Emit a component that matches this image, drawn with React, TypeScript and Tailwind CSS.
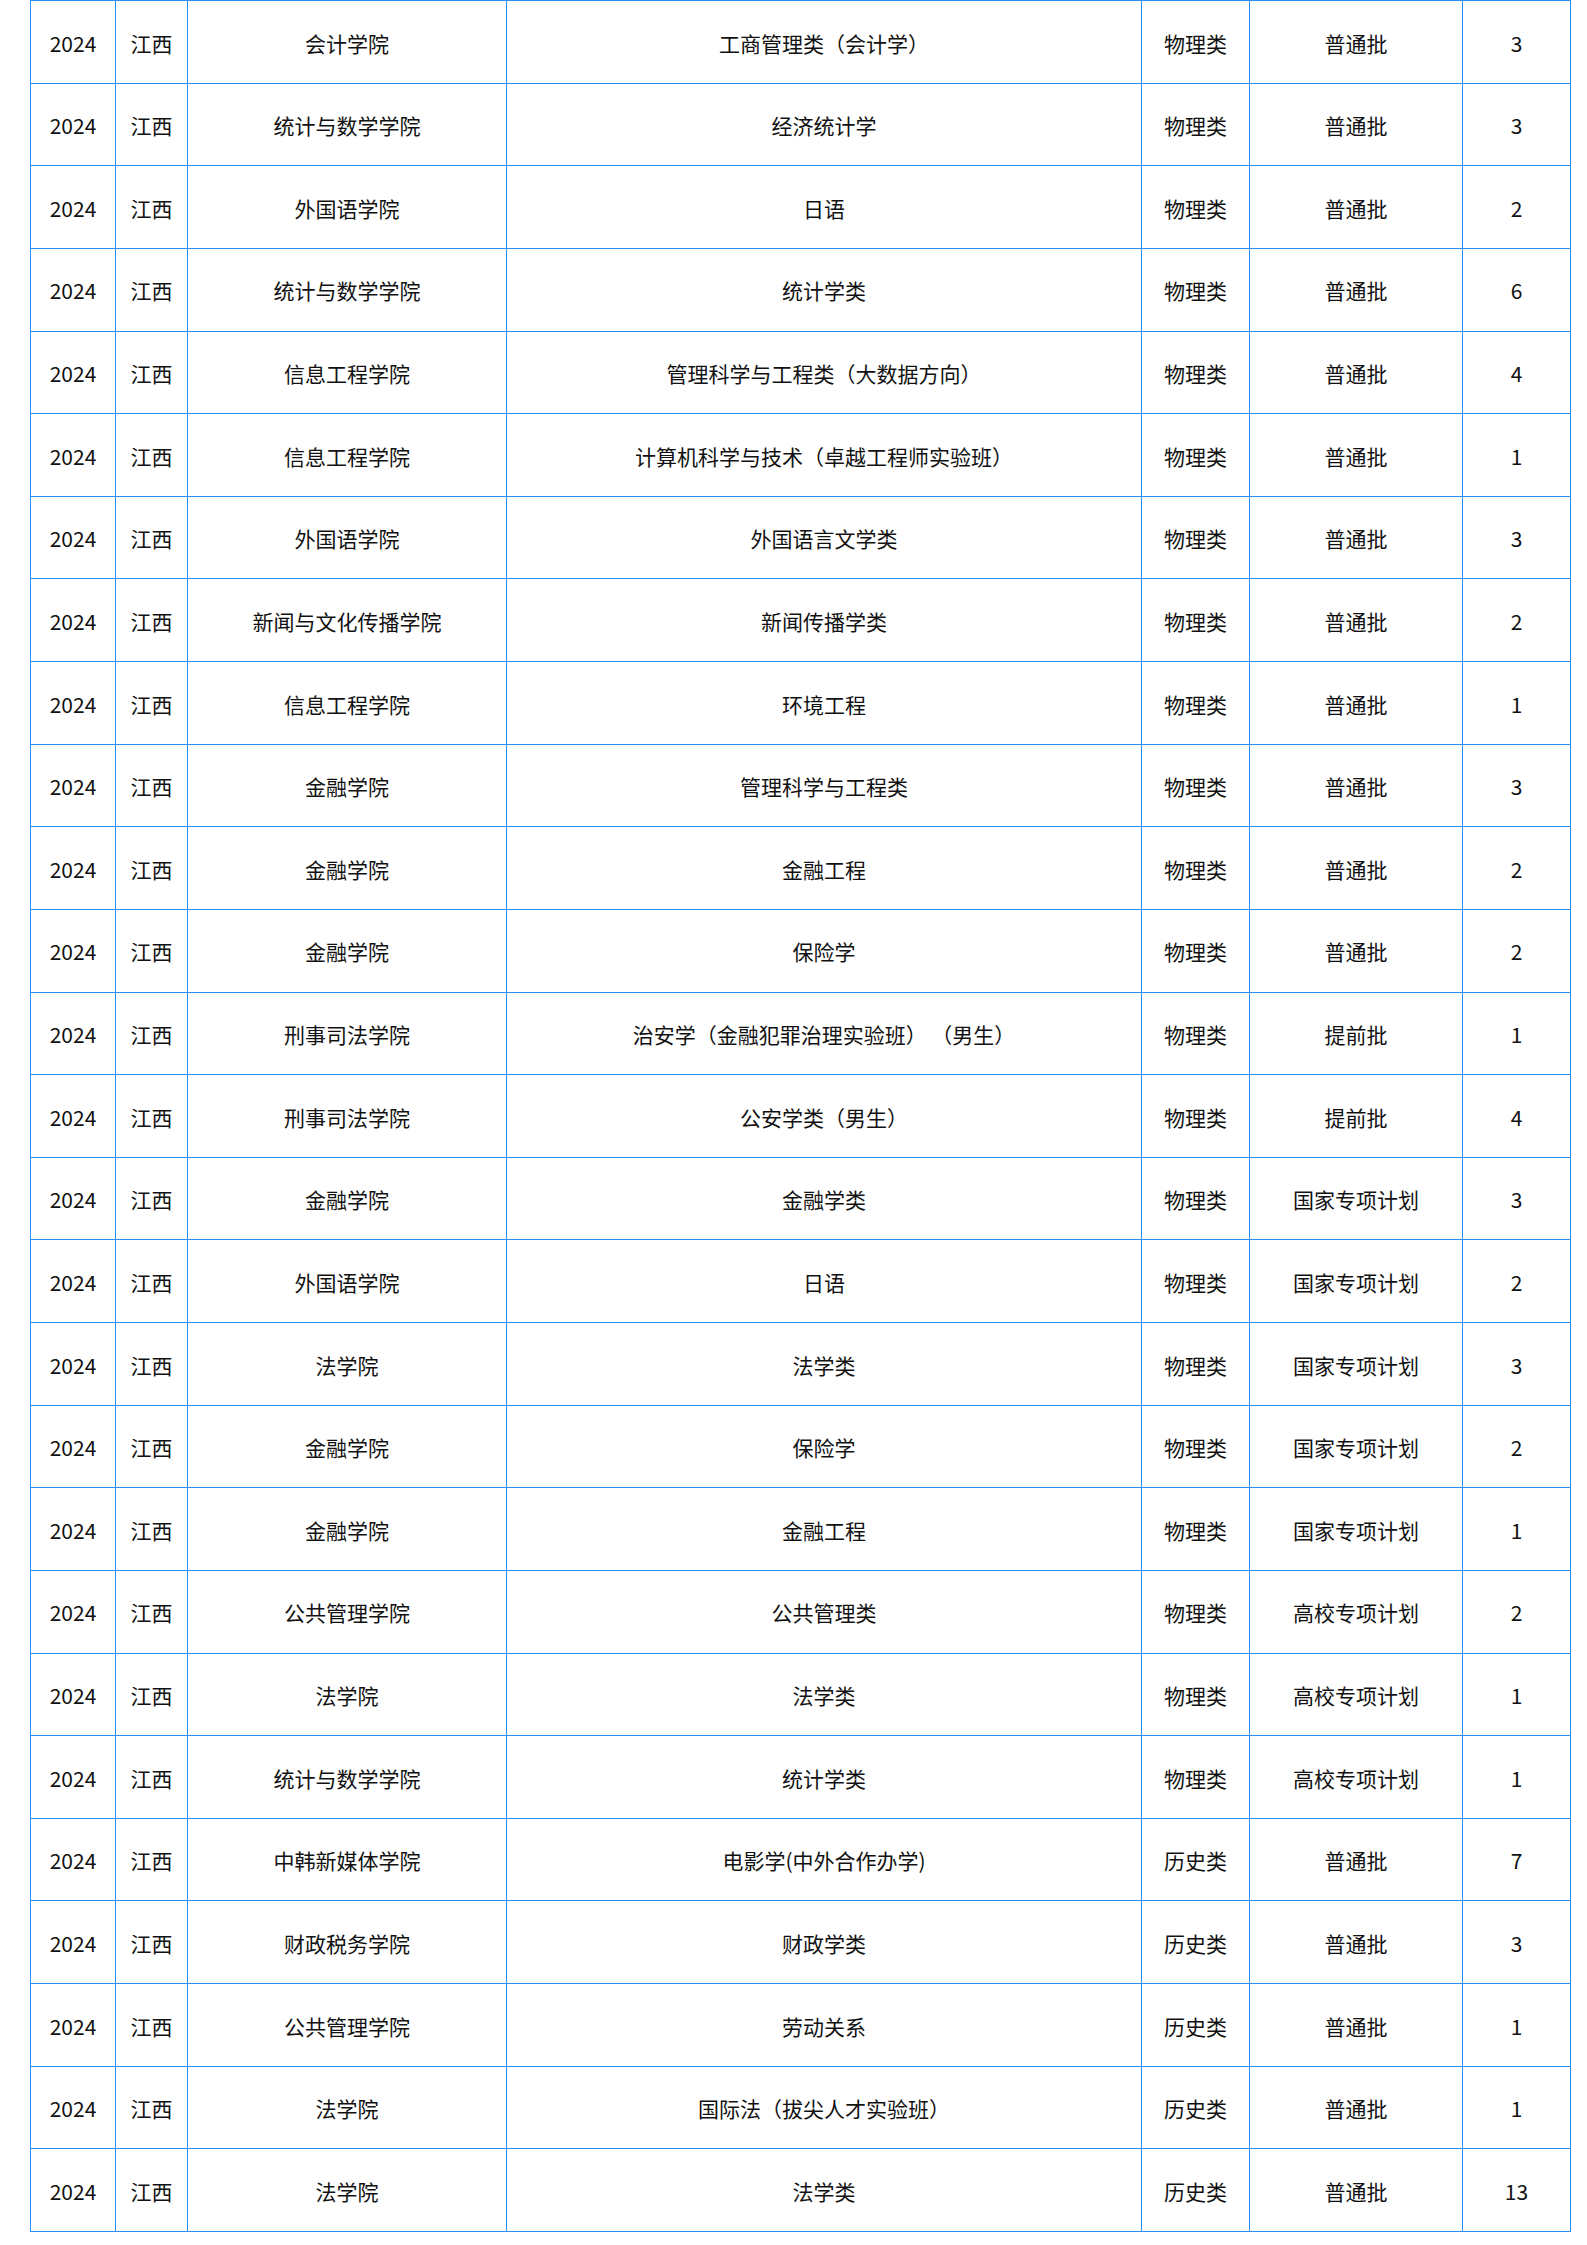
const rows: [string, string, string, string, string][] = [
  ['会计学院', '工商管理类（会计学）', '物理类', '普通批', '3'],
  ['统计与数学学院', '经济统计学', '物理类', '普通批', '3'],
  ['外国语学院', '日语', '物理类', '普通批', '2'],
  ['统计与数学学院', '统计学类', '物理类', '普通批', '6'],
  ['信息工程学院', '管理科学与工程类（大数据方向）', '物理类', '普通批', '4'],
  ['信息工程学院', '计算机科学与技术（卓越工程师实验班）', '物理类', '普通批', '1'],
  ['外国语学院', '外国语言文学类', '物理类', '普通批', '3'],
  ['新闻与文化传播学院', '新闻传播学类', '物理类', '普通批', '2'],
  ['信息工程学院', '环境工程', '物理类', '普通批', '1'],
  ['金融学院', '管理科学与工程类', '物理类', '普通批', '3'],
  ['金融学院', '金融工程', '物理类', '普通批', '2'],
  ['金融学院', '保险学', '物理类', '普通批', '2'],
  ['刑事司法学院', '治安学（金融犯罪治理实验班） （男生）', '物理类', '提前批', '1'],
  ['刑事司法学院', '公安学类（男生）', '物理类', '提前批', '4'],
  ['金融学院', '金融学类', '物理类', '国家专项计划', '3'],
  ['外国语学院', '日语', '物理类', '国家专项计划', '2'],
  ['法学院', '法学类', '物理类', '国家专项计划', '3'],
  ['金融学院', '保险学', '物理类', '国家专项计划', '2'],
  ['金融学院', '金融工程', '物理类', '国家专项计划', '1'],
  ['公共管理学院', '公共管理类', '物理类', '高校专项计划', '2'],
  ['法学院', '法学类', '物理类', '高校专项计划', '1'],
  ['统计与数学学院', '统计学类', '物理类', '高校专项计划', '1'],
  ['中韩新媒体学院', '电影学(中外合作办学)', '历史类', '普通批', '7'],
  ['财政税务学院', '财政学类', '历史类', '普通批', '3'],
  ['公共管理学院', '劳动关系', '历史类', '普通批', '1'],
  ['法学院', '国际法（拔尖人才实验班）', '历史类', '普通批', '1'],
  ['法学院', '法学类', '历史类', '普通批', '13'],
];

function Cell({ children }: { children: string }) {
  return (
    <div className="flex items-center justify-center border-r border-b border-[#2b8ef0] pt-[3px] whitespace-pre">
      {children}
    </div>
  );
}

export default function App() {
  return (
    <div className="min-h-screen bg-white pl-[30px] font-['Noto_Sans_CJK_SC','Noto_Sans',sans-serif] text-[21px] text-[#111]">
      <div className="grid w-[1541px] grid-cols-[85px_72px_319px_635px_108px_213px_108px] auto-rows-[82.63px] border-l border-t border-[#2b8ef0]">
        {rows.map((r, i) => (
          <div key={i} className="contents">
            <Cell>2024</Cell>
            <Cell>江西</Cell>
            <Cell>{r[0]}</Cell>
            <Cell>{r[1]}</Cell>
            <Cell>{r[2]}</Cell>
            <Cell>{r[3]}</Cell>
            <Cell>{r[4]}</Cell>
          </div>
        ))}
      </div>
    </div>
  );
}
